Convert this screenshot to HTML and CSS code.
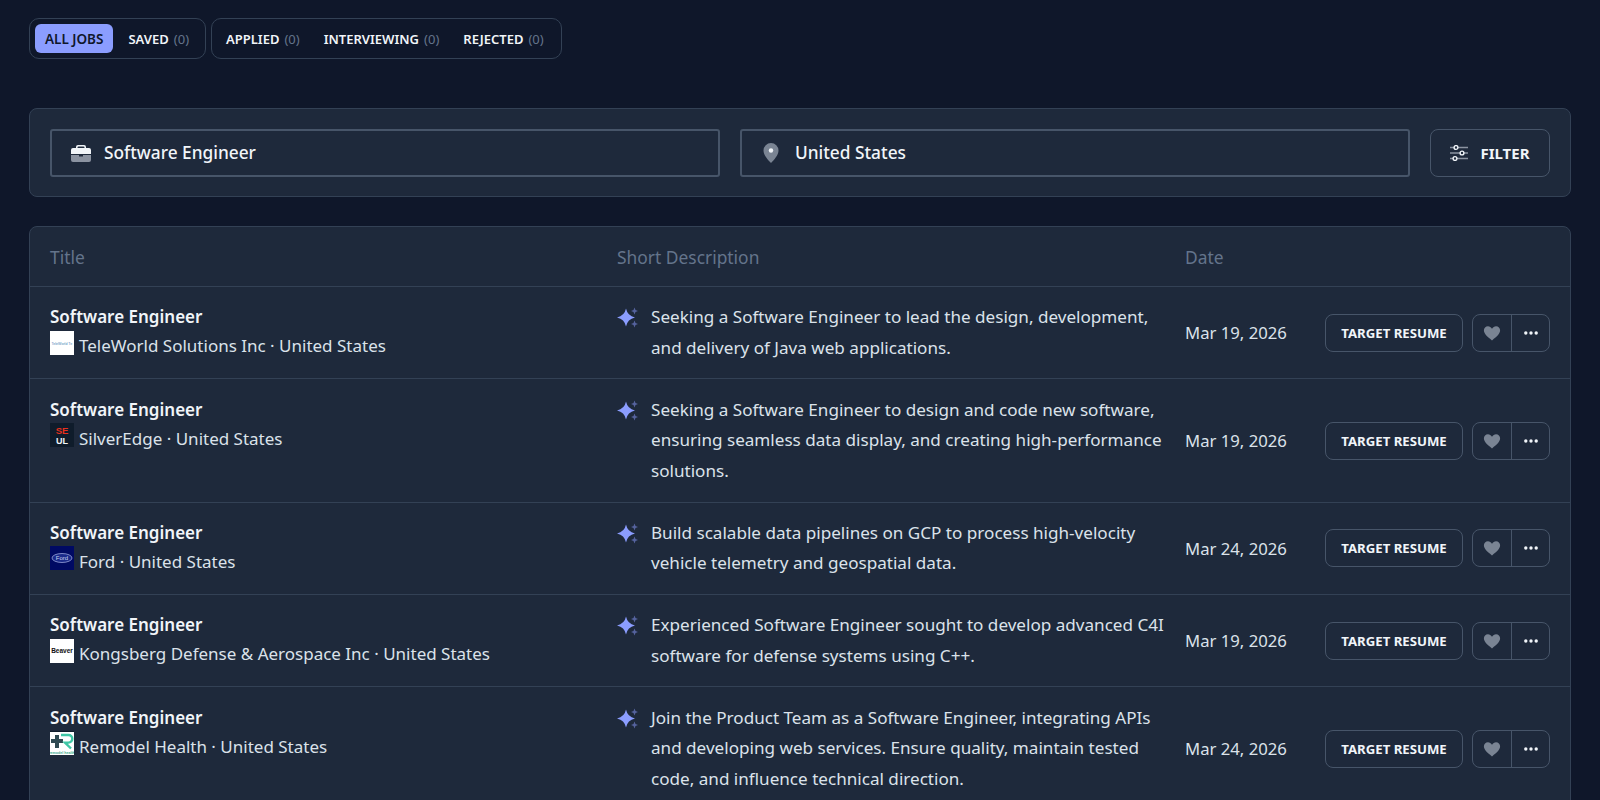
FILE: index.html
```html
<!DOCTYPE html>
<html lang="en">
<head>
<meta charset="utf-8">
<title>Jobs</title>
<link rel="stylesheet" href="styles.css">
</head>
<body>
<svg class="defs" width="0" height="0" aria-hidden="true">
  <defs>
    <symbol id="spark" viewBox="0 0 22 22">
      <path fill="#8b9dff" d="M9 2.500Q10.500 9.800 18 11.500 10.500 13.200 9 20.500 7.500 13.200 0 11.500 7.500 9.800 9 2.500z"/>
      <path fill="#56639f" d="M17.500 1.500l1 2.500 2.500 1-2.500 1-1 2.500-1-2.500-2.500-1 2.500-1zM17.500 14.500l1 2.500 2.500 1-2.500 1-1 2.500-1-2.500-2.500-1 2.500-1z"/>
    </symbol>
    <symbol id="heart" viewBox="0 0 20 20">
      <path fill="#7a8493" d="M10 18.2C4 13.6 1 10.6 1 7c0-2.7 2-4.6 4.5-4.6 1.800 0 3.400 1 4.500 2.800 1.100-1.800 2.700-2.800 4.500-2.800C17 2.400 19 4.300 19 7c0 3.600-3 6.600-9 11.200z"/>
    </symbol>
    <symbol id="dots" viewBox="0 0 16 16">
      <circle cx="2.800" cy="8" r="1.700" fill="#f1f5f9"/><circle cx="8" cy="8" r="1.700" fill="#f1f5f9"/><circle cx="13.200" cy="8" r="1.700" fill="#f1f5f9"/>
    </symbol>
  </defs>
</svg>
<main class="page">
  <nav class="tabs">
    <div class="tab-group">
      <a class="tab tab-active">ALL JOBS</a>
      <a class="tab">SAVED <span class="count">(0)</span></a>
    </div>
    <div class="tab-group">
      <a class="tab">APPLIED <span class="count">(0)</span></a>
      <a class="tab">INTERVIEWING <span class="count">(0)</span></a>
      <a class="tab">REJECTED <span class="count">(0)</span></a>
    </div>
  </nav>

  <section class="search card">
    <div class="field">
      <svg class="field-icon" width="20" height="18" viewBox="0 0 20 18"><path fill="#f1f5f9" d="M7 1h6a2 2 0 0 1 2 2v1h3a2 2 0 0 1 2 2v4H0V6a2 2 0 0 1 2-2h3V3a2 2 0 0 1 2-2zm.500 1.500a1 1 0 0 0-1 1V4h7v-.5a1 1 0 0 0-1-1z"/><path fill="#8b93a1" d="M0 11h8v1.500h4V11h8v5a2 2 0 0 1-2 2H2a2 2 0 0 1-2-2z"/></svg>
      <span>Software Engineer</span>
    </div>
    <div class="field">
      <svg class="field-icon pin" width="16" height="20" viewBox="0 0 16 20"><path fill="#7a8493" d="M8 0a7.500 7.500 0 0 1 7.500 7.500C15.500 12 11 17 8 20 5 17 .5 12 .5 7.500A7.500 7.500 0 0 1 8 0z"/><circle cx="8" cy="7.500" r="2.200" fill="#f1f5f9"/></svg>
      <span>United States</span>
    </div>
    <button class="filter">
      <svg width="18" height="16" viewBox="0 0 18 16" fill="none"><path stroke="#8b93a1" stroke-width="1.500" d="M0 2.500h18M0 8h18M0 13.500h18"/><circle cx="6" cy="2.500" r="1.900" fill="#1e293b" stroke="#f1f5f9" stroke-width="1.400"/><circle cx="12" cy="8" r="1.900" fill="#1e293b" stroke="#f1f5f9" stroke-width="1.400"/><circle cx="5" cy="13.500" r="1.900" fill="#1e293b" stroke="#f1f5f9" stroke-width="1.400"/></svg>
      FILTER
    </button>
  </section>

  <section class="jobs card">
    <div class="row head">
      <div>Title</div>
      <div>Short Description</div>
      <div>Date</div>
    </div>

    <article class="row job">
      <div class="who">
        <div class="job-title">Software Engineer</div>
        <div class="company">
          <svg class="logo" viewBox="0 0 24 24"><rect width="24" height="24" fill="#fff"/><text class="logo-text" x="1.500" y="13.500" font-size="3.600" fill="#4a86b8">TeleWorld Te</text></svg>
          <span>TeleWorld Solutions Inc · United States</span>
        </div>
      </div>
      <div class="desc"><svg class="spark"><use href="#spark"/></svg><p>Seeking a Software Engineer to lead the design, development, and delivery of Java web applications.</p></div>
      <div class="date">Mar 19, 2026</div>
      <div class="actions"><button class="target">TARGET RESUME</button><div class="pair"><button class="icon-btn"><svg width="18" height="18"><use href="#heart"/></svg></button><button class="icon-btn"><svg width="16" height="16"><use href="#dots"/></svg></button></div></div>
    </article>

    <article class="row job">
      <div class="who">
        <div class="job-title">Software Engineer</div>
        <div class="company">
          <svg class="logo" viewBox="0 0 24 24"><rect width="24" height="24" fill="#0f1c2b"/><text class="logo-text logo-bold" x="12" y="10.500" text-anchor="middle" font-size="9.500" fill="#e8301c">SE</text><text class="logo-text logo-bold" x="12" y="20.500" text-anchor="middle" font-size="9" fill="#f1f5f9">UL</text></svg>
          <span>SilverEdge · United States</span>
        </div>
      </div>
      <div class="desc"><svg class="spark"><use href="#spark"/></svg><p>Seeking a Software Engineer to design and code new software, ensuring seamless data display, and creating high-performance solutions.</p></div>
      <div class="date">Mar 19, 2026</div>
      <div class="actions"><button class="target">TARGET RESUME</button><div class="pair"><button class="icon-btn"><svg width="18" height="18"><use href="#heart"/></svg></button><button class="icon-btn"><svg width="16" height="16"><use href="#dots"/></svg></button></div></div>
    </article>

    <article class="row job">
      <div class="who">
        <div class="job-title">Software Engineer</div>
        <div class="company">
          <svg class="logo" viewBox="0 0 24 24"><rect width="24" height="24" fill="#000a63"/><ellipse cx="12" cy="12" rx="10" ry="4.500" fill="#1a2a8a" stroke="#aab4e8" stroke-width=".7"/><text class="logo-text" x="12" y="14" text-anchor="middle" font-size="6" fill="#c9d1f2">Ford</text></svg>
          <span>Ford · United States</span>
        </div>
      </div>
      <div class="desc"><svg class="spark"><use href="#spark"/></svg><p>Build scalable data pipelines on GCP to process high-velocity vehicle telemetry and geospatial data.</p></div>
      <div class="date">Mar 24, 2026</div>
      <div class="actions"><button class="target">TARGET RESUME</button><div class="pair"><button class="icon-btn"><svg width="18" height="18"><use href="#heart"/></svg></button><button class="icon-btn"><svg width="16" height="16"><use href="#dots"/></svg></button></div></div>
    </article>

    <article class="row job">
      <div class="who">
        <div class="job-title">Software Engineer</div>
        <div class="company">
          <svg class="logo" viewBox="0 0 24 24"><rect width="24" height="24" fill="#fff"/><text class="logo-text logo-bold" x="12" y="13.500" text-anchor="middle" font-size="6.500" fill="#111">Beaver</text></svg>
          <span>Kongsberg Defense &amp; Aerospace Inc · United States</span>
        </div>
      </div>
      <div class="desc"><svg class="spark"><use href="#spark"/></svg><p>Experienced Software Engineer sought to develop advanced C4I software for defense systems using C++.</p></div>
      <div class="date">Mar 19, 2026</div>
      <div class="actions"><button class="target">TARGET RESUME</button><div class="pair"><button class="icon-btn"><svg width="18" height="18"><use href="#heart"/></svg></button><button class="icon-btn"><svg width="16" height="16"><use href="#dots"/></svg></button></div></div>
    </article>

    <article class="row job">
      <div class="who">
        <div class="job-title">Software Engineer</div>
        <div class="company">
          <svg class="logo" viewBox="0 0 24 24"><rect width="24" height="24" fill="#fff"/><rect width="24" height="1" fill="#0f1c2b"/><path fill="#2f4a52" d="M5 4h4v4h4v4H9v5H5v-5H1V8h4z"/><path fill="none" stroke="#3fc7a6" stroke-width="2.400" d="M11 4h7.500a3.800 3.800 0 0 1 0 7.600H15l6 5.900"/><text class="logo-text logo-bold" x="12" y="22.500" text-anchor="middle" font-size="3.600" fill="#3fa98f">remodel health</text></svg>
          <span>Remodel Health · United States</span>
        </div>
      </div>
      <div class="desc"><svg class="spark"><use href="#spark"/></svg><p>Join the Product Team as a Software Engineer, integrating APIs and developing web services. Ensure quality, maintain tested code, and influence technical direction.</p></div>
      <div class="date">Mar 24, 2026</div>
      <div class="actions"><button class="target">TARGET RESUME</button><div class="pair"><button class="icon-btn"><svg width="18" height="18"><use href="#heart"/></svg></button><button class="icon-btn"><svg width="16" height="16"><use href="#dots"/></svg></button></div></div>
    </article>
  </section>
</main>
</body>
</html>
```
FILE: styles.css
```css
* { box-sizing: border-box; }
html, body { margin: 0; height: 800px; overflow: hidden; }
body {
  background: #0f172a;
  color: #f1f5f9;
  font-family: "Noto Sans", "Open Sans", sans-serif;
  font-size: 17px;
}
.defs { display: block; height: 0; }
.page { padding: 18px 29px 0 29px; }
.tabs { display: flex; gap: 5.500px; margin-bottom: 49px; }
.tab-group {
  display: flex;
  height: 41px;
  padding: 5px 3.500px 5px 2px;
  border: 1px solid #334155;
  border-radius: 10px;
}
.tab-group + .tab-group { padding-right: 5.500px; }
.tab {
  display: flex;
  align-items: center;
  gap: 5px;
  padding: 0 12px;
  border-radius: 6px;
  font-size: 13px;
  font-weight: 600;
  white-space: nowrap;
}
.tab-active {
  margin: 0 3px;
  padding: 0 10px;
  background: #8b9dff;
  color: #0f172a;
  font-size: 13.500px;
}
.count { color: #64748b; font-weight: 400; }
.card {
  background: #1e293b;
  border: 1px solid #334155;
  border-radius: 8px;
}
.search { display: flex; gap: 20px; padding: 19.500px 20px; margin-bottom: 29px; }
.field {
  flex: 1;
  display: flex;
  align-items: center;
  height: 48px;
  padding: 0 19px;
  border: 2px solid #475569;
  border-radius: 3px;
  gap: 13px;
  font-weight: 500;
  font-size: 17.300px;
}
.field-icon { flex: none; }
.pin { margin-left: 2px; margin-right: 3px; }
.filter {
  display: flex;
  align-items: center;
  justify-content: center;
  gap: 12px;
  flex: none;
  width: 120px;
  height: 48px;
  background: transparent;
  border: 1px solid #475569;
  border-radius: 8px;
  color: #f1f5f9;
  font: 700 15px "Noto Sans", sans-serif;
}
.jobs { overflow: hidden; }
.row {
  display: grid;
  grid-template-columns: 567px 568px 1fr;
  padding: 0 20px;
}
.head {
  align-items: center;
  height: 59px;
  color: #64748b;
  font-size: 17.400px;
}
.job {
  grid-template-columns: 567px 568px 110px 1fr;
  padding-top: 15.150px;
  padding-bottom: 15.150px;
  border-top: 1px solid #334155;
  align-items: center;
}
.who { align-self: start; }
.job-title { font-weight: 600; font-size: 17px; line-height: 30px; }
.company {
  display: flex;
  align-items: flex-start;
  gap: 5px;
  color: #dbe2ea;
  font-size: 17px;
  line-height: 28px;
}
.logo { width: 24px; height: 24px; flex: none; margin-top: -1.500px; }
.logo-text { font-family: "Liberation Sans", sans-serif; }
.logo-bold { font-weight: 700; }
.desc { display: flex; gap: 12px; align-self: start; padding-right: 18px; color: #dbe2ea; font-size: 17.100px; }
.desc p { margin: 0; line-height: 30.600px; }
.spark { flex: none; width: 22px; height: 22px; margin-top: 4px; }
.date { color: #dbe2ea; white-space: nowrap; font-size: 16.700px; }
.actions { display: flex; justify-content: flex-end; gap: 9px; }
.target {
  width: 138px;
  height: 38px;
  background: transparent;
  border: 1px solid #475569;
  border-radius: 8px;
  color: #f1f5f9;
  font: 700 13.200px "Noto Sans", sans-serif;
}
.pair { display: flex; border: 1px solid #475569; border-radius: 8px; height: 38px; }
.icon-btn {
  display: flex;
  align-items: center;
  justify-content: center;
  width: 38px;
  padding: 0;
  background: transparent;
  border: 0;
}
.icon-btn + .icon-btn { border-left: 1px solid #475569; }
```
